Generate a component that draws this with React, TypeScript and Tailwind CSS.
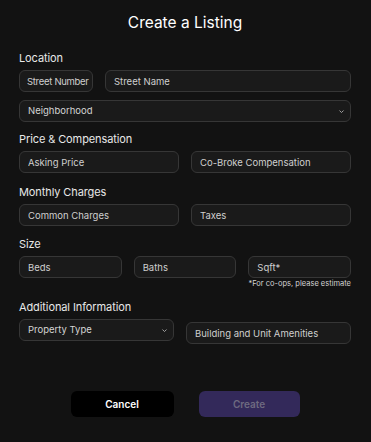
import React from "react";

const inputCls =
  "h-[22px] min-w-0 rounded-[6px] border border-[#363636] bg-[#1a1a1a] px-[8px] text-[9.5px] text-[#d4d4d4] placeholder:text-[#cfcfcf] outline-none";

function Field({ placeholder, className = "" }: { placeholder: string; className?: string }) {
  return <input placeholder={placeholder} className={`${inputCls} ${className}`} />;
}

function Select({ label, className = "" }: { label: string; className?: string }) {
  return (
    <div className={`${inputCls} flex items-center justify-between pr-[5px] ${className}`}>
      <span>{label}</span>
      <svg width="7" height="7" viewBox="0 0 10 10" fill="none">
        <path d="M2.5 4l2.5 2.5L7.5 4" stroke="#a3a3a3" strokeWidth="1.4" strokeLinecap="round" strokeLinejoin="round" />
      </svg>
    </div>
  );
}

function Label({ children }: { children: React.ReactNode }) {
  return (
    <div className="mb-[4px] h-[16px] text-[11px] leading-[16px] tracking-[-0.1px] text-[#e8e8e8]">{children}</div>
  );
}

export default function App() {
  return (
    <div
      className="flex h-[442px] w-[371px] flex-col bg-[#121212] pl-[19px] pr-[20px] text-white"
      style={{ fontFamily: "Inter, 'Noto Sans', sans-serif" }}
    >
      <h1 className="mt-[11px] h-[24px] text-center text-[15.5px] leading-[24px] text-white">Create a Listing</h1>

      <div className="mt-[15px]">
        <Label>Location</Label>
        <div className="flex gap-[12px]">
          <Field placeholder="Street Number" className="w-[74px] shrink-0 pl-[7px] pr-[1px] tracking-[-0.3px]" />
          <Field placeholder="Street Name" className="flex-1" />
        </div>
        <Select label="Neighborhood" className="mt-[8px]" />
      </div>

      <div className="mt-[9px]">
        <Label>Price &amp; Compensation</Label>
        <div className="grid grid-cols-2 gap-[12px]">
          <Field placeholder="Asking Price" />
          <Field placeholder="Co-Broke Compensation" />
        </div>
      </div>

      <div className="mt-[11px]">
        <Label>Monthly Charges</Label>
        <div className="grid grid-cols-2 gap-[12px]">
          <Field placeholder="Common Charges" />
          <Field placeholder="Taxes" />
        </div>
      </div>

      <div className="mt-[10px]">
        <Label>Size</Label>
        <div className="grid grid-cols-3 gap-[12px]">
          <Field placeholder="Beds" />
          <Field placeholder="Baths" />
          <Field placeholder="Sqft*" />
        </div>
        <div className="mt-[1px] text-right text-[7.5px] leading-[10px] text-[#d4d4d4]">*For co-ops, please estimate</div>
      </div>

      <div className="mt-[10px]">
        <Label>Additional Information</Label>
        <div className="flex items-start gap-[12px]">
          <Select label="Property Type" className="w-[155px] shrink-0" />
          <Field placeholder="Building and Unit Amenities" className="mt-[3px] flex-1" />
        </div>
      </div>

      <div className="mt-[47px] flex justify-center gap-[25px]">
        <button className="h-[26px] w-[103px] rounded-[6px] bg-black text-[10px] font-semibold text-white">Cancel</button>
        <button className="h-[26px] w-[101px] rounded-[6px] bg-[#33295a] text-[10px] font-semibold text-[#6e6a80]">Create</button>
      </div>
    </div>
  );
}
